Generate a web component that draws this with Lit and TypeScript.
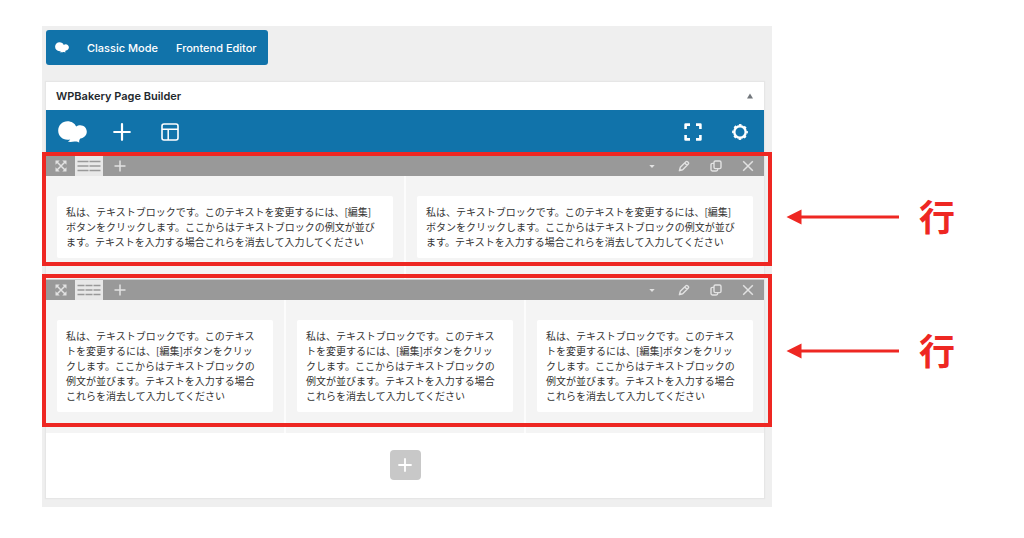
import { LitElement, html, css, svg } from "lit";
import { customElement, property } from "lit/decorators.js";

const BLOCK_TEXT =
  "私は、テキストブロックです。このテキストを変更するには、[編集]ボタンをクリックします。ここからはテキストブロックの例文が並びます。テキストを入力する場合これらを消去して入力してください";

const logo = (w: number, h: number) => html`<svg width=${w} height=${h} viewBox="0 0 29 22" aria-hidden="true">
  <path fill="#fff" d="M9.500 0.300C13.500 0.300 16.800 2.400 18.200 5.600C19.300 4.700 20.800 4.200 22.200 4.200C25.900 4.200 28.800 7 28.800 10.700C28.800 14.200 26 17 22.400 17.400C21.400 18.400 21 19.700 21.200 21.800C19.600 20.600 18.300 20.500 16.500 20.600C14.500 20.900 12.200 21 9.800 20.800C10.900 20 11.700 19.300 12.200 18.400C5.200 19.900 0.200 15.300 0.200 9.700C0.200 4.400 4.300 0.300 9.500 0.300Z"/>
</svg>`;

const icon = (size: number, body: unknown) => html`<svg width=${size} height=${size} viewBox="0 0 ${size} ${size}" fill="none" stroke="currentColor" aria-hidden="true">${body}</svg>`;

const icons = {
  plus: () => icon(18, svg`<path stroke-width="2.200" stroke-linecap="round" d="M9 1.200V16.800M1.200 9H16.800"/>`),
  layout: () => icon(18, svg`<rect x="1" y="1" width="16" height="16" rx="2" stroke-width="1.600"/><path stroke-width="1.500" d="M1 6.300H17M7.200 6.300V17"/>`),
  fullscreen: () => icon(18, svg`<path stroke-width="2.600" stroke-linejoin="round" d="M1.600 6V1.600H6M12 1.600H16.400V6M16.400 12V16.400H12M6 16.400H1.600V12"/>`),
  gear: () => icon(16, svg`<circle cx="8" cy="8" r="5.700" stroke-width="2.400"/><circle cx="8" cy="8" r="7.100" stroke-width="1.600" stroke-dasharray="2.600 2.976" stroke-dashoffset="1.300"/>`),
  move: () => icon(12, svg`<path stroke-width="1.500" d="M2 2L10 10M10 2L2 10"/><path fill="currentColor" stroke="none" d="M0.500 0.500H4.700L0.500 4.700ZM11.500 0.500V4.700L7.300 0.500ZM11.500 11.500H7.300L11.500 7.300ZM0.500 11.500V7.300L4.700 11.500Z"/>`),
  add: () => icon(12, svg`<path stroke-width="1.500" d="M6 0.500V11.500M0.500 6H11.500"/>`),
  arrow: () => icon(12, svg`<path fill="currentColor" stroke="none" d="M3.300 5H8.700L6 8Z"/>`),
  edit: () => icon(12, svg`<path stroke-width="1.400" stroke-linejoin="round" d="M1.500 10.500L2.300 7.300L7.700 1.900C8.300 1.300 9.200 1.300 9.800 1.900L10.100 2.200C10.700 2.800 10.700 3.700 10.100 4.300L4.700 9.700ZM6.700 2.900L9.100 5.300"/><path fill="currentColor" stroke="none" d="M0.700 11.300L1.600 8.400L3.600 10.400Z"/>`),
  clone: () => icon(12, svg`<rect x="4" y="1" width="7" height="7.600" rx="1.400" stroke-width="1.400"/><path stroke-width="1.400" d="M4 3.400H2.400C1.500 3.400 1 4 1 4.800V9.600C1 10.500 1.500 11 2.400 11H6.200C7.100 11 7.700 10.500 7.700 9.600V8.600"/>`),
  close: () => icon(12, svg`<path stroke-width="1.500" d="M1.200 1.200L10.800 10.800M10.800 1.200L1.200 10.800"/>`),
};

@customElement("builder-row")
class BuilderRow extends LitElement {
  @property({ type: Number }) columns = 2;

  static styles = css`
    :host {
      display: block;
      background: #f4f4f4;
    }
    .bar {
      display: flex;
      align-items: stretch;
      height: 20px;
      background: #999;
    }
    .spacer {
      flex: 1;
    }
    button {
      display: flex;
      align-items: center;
      justify-content: center;
      width: 32px;
      margin: 0;
      padding: 0;
      border: 0;
      background: none;
      color: #e2e2e2;
    }
    .move {
      width: 29px;
    }
    .layout {
      width: 28px;
      background: #e8e8e8;
      color: #999;
    }
    .add {
      width: 34px;
    }
    .columns {
      display: grid;
      grid-auto-flow: column;
      grid-auto-columns: minmax(0, 1fr);
      gap: 2px;
      background: #fcfcfc;
    }
    .column {
      padding: 20px 11px 21px;
      background: #f4f4f4;
    }
    .card {
      margin: 0;
      padding: 8px 16px 9px 9px;
      border-radius: 2px;
      background: #fff;
      color: #333;
      font-size: 10px;
      line-height: 15px;
    }
  `;

  render() {
    const step = 24 / this.columns;
    const cells = Array.from({ length: this.columns }, (_, i) => i);
    return html`
      <div class="bar">
        <button class="move" aria-label="移動">${icons.move()}</button>
        <button class="layout" aria-label="レイアウト">
          <svg width="24" height="12" viewBox="0 0 24 12" stroke="currentColor" stroke-width="1.300" aria-hidden="true">
            ${cells.map((i) => svg`<path d="M${i * step + 0.5} 1.500H${(i + 1) * step - 0.5}M${i * step + 0.5} 6H${(i + 1) * step - 0.5}M${i * step + 0.5} 10.500H${(i + 1) * step - 0.5}"/>`)}
          </svg>
        </button>
        <button class="add" aria-label="追加">${icons.add()}</button>
        <span class="spacer"></span>
        <button aria-label="開閉">${icons.arrow()}</button>
        <button aria-label="編集">${icons.edit()}</button>
        <button aria-label="複製">${icons.clone()}</button>
        <button aria-label="削除">${icons.close()}</button>
      </div>
      <div class="columns">
        ${cells.map(() => html`<div class="column"><p class="card">${BLOCK_TEXT}</p></div>`)}
      </div>
    `;
  }
}

@customElement("app-root")
class AppRoot extends LitElement {
  static styles = css`
    :host {
      display: block;
      min-height: 100vh;
      background: #fff;
      font-family: Inter, "Noto Sans CJK JP", sans-serif;
    }
    .page {
      display: flex;
      align-items: flex-start;
      padding: 26px 0 0 42px;
    }
    .editor {
      flex: 1;
      min-width: 0;
      padding: 4px 8px 9px 4px;
      background: #efefef;
    }
    button {
      display: flex;
      align-items: center;
      justify-content: center;
      margin: 0;
      padding: 0;
      border: 0;
      background: none;
      color: #fff;
      font: inherit;
    }
    .modes {
      display: flex;
      align-items: center;
      gap: 18px;
      width: fit-content;
      height: 35px;
      margin-bottom: 17px;
      padding: 0 11px 0 9px;
      border-radius: 3px;
      background: #1173aa;
      font-size: 11px;
      font-weight: 500;
    }
    .box {
      background: #fff;
      box-shadow: 0 0 1px 1px #e6e6e6;
    }
    .title {
      display: flex;
      align-items: center;
      justify-content: space-between;
      height: 28px;
      padding: 0 10px;
      color: #23282d;
    }
    h2 {
      margin: 0;
      font-size: 11px;
      font-weight: 600;
    }
    .toggle {
      color: #72777c;
    }
    .toolbar {
      display: flex;
      align-items: center;
      gap: 26px;
      height: 46px;
      padding: 0 16px 2px 12px;
      box-sizing: border-box;
      background: #1173aa;
    }
    .tools {
      display: flex;
      align-items: center;
      gap: 30px;
    }
    .tools.end {
      margin-left: auto;
    }
    .rows {
      display: grid;
      gap: 1px;
      background: #ccc;
    }
    .row {
      position: relative;
      font-family: "Noto Sans CJK JP", sans-serif;
    }
    .frame {
      position: absolute;
      inset: -4px -8px 13px -4px;
      border: 4px solid #ee2722;
      pointer-events: none;
    }
    .row + .row .frame {
      inset: -6px -8px 6px -4px;
    }
    .append {
      display: flex;
      justify-content: center;
      padding: 17px 0 18px;
    }
    .append button {
      width: 31px;
      height: 30px;
      border-radius: 4px;
      background: #c8c8c8;
    }
    .notes {
      display: grid;
      gap: 86px;
      width: 238px;
      padding: 167px 0 0 14px;
      color: #ee2722;
      font-family: "Noto Sans CJK JP", sans-serif;
      font-size: 36px;
      font-weight: 700;
      line-height: 48px;
    }
    .note {
      display: flex;
      align-items: center;
      gap: 20px;
    }
    .note span {
      line-height: 44px;
      padding-bottom: 4px;
    }
  `;

  note() {
    return html`<div class="note">
      <svg width="113" height="16" viewBox="0 0 113 16" fill="currentColor" aria-hidden="true">
        <path d="M0.500 8L15.500 0.500V6.500H113V9.500H15.500V15.500Z" />
      </svg>
      <span>行</span>
    </div>`;
  }

  render() {
    return html`
      <div class="page">
        <main class="editor">
          <nav class="modes">
            ${logo(14, 11)}
            <button>Classic Mode</button>
            <button>Frontend Editor</button>
          </nav>
          <section class="box">
            <header class="title">
              <h2>WPBakery Page Builder</h2>
              <button class="toggle" aria-label="パネルを閉じる">
                <svg width="8" height="6" viewBox="0 0 8 6" fill="currentColor" aria-hidden="true"><path d="M4 0.500L7 5.500H1Z" /></svg>
              </button>
            </header>
            <div class="toolbar">
              ${logo(29, 22)}
              <div class="tools">
                <button aria-label="要素を追加">${icons.plus()}</button>
                <button aria-label="テンプレート">${icons.layout()}</button>
              </div>
              <div class="tools end">
                <button aria-label="全画面">${icons.fullscreen()}</button>
                <button aria-label="設定">${icons.gear()}</button>
              </div>
            </div>
            <div class="rows">
              ${[2, 3].map((n) => html`<div class="row"><builder-row .columns=${n}></builder-row><div class="frame"></div></div>`)}
            </div>
            <div class="append">
              <button aria-label="要素を追加">
                <svg width="14" height="14" viewBox="0 0 14 14" stroke="currentColor" stroke-width="1.800" stroke-linecap="round" aria-hidden="true"><path d="M7 1V13M1 7H13" /></svg>
              </button>
            </div>
          </section>
        </main>
        <aside class="notes">${this.note()}${this.note()}</aside>
      </div>
    `;
  }
}
